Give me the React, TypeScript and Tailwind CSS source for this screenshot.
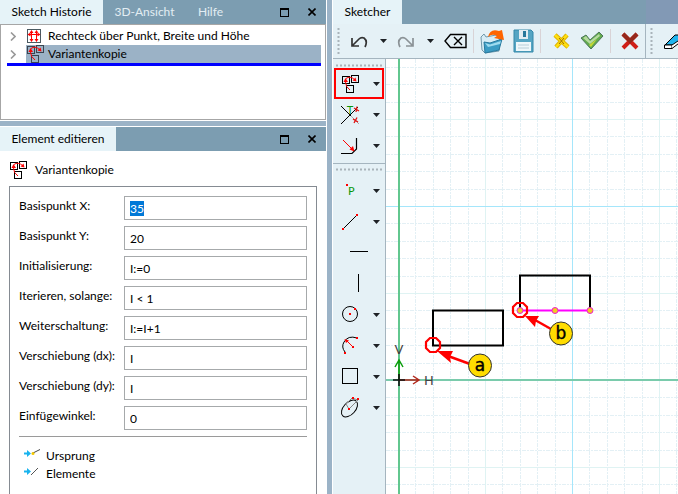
import { useEffect, useRef } from "react";
import type { ReactNode } from "react";

function VariantShapes({ ink = "#000" }: { ink?: string }) {
  return (
    <>
      <g shapeRendering="crispEdges" stroke={ink}>
        <rect x="0.5" y="1.5" width="7" height="7" />
        <rect x="9.5" y="0.5" width="7" height="7" />
        <rect x="4.5" y="10.5" width="7" height="7" />
      </g>
      <path d="M8 15 Q3.5 12 3.5 7 M4 3.5 Q8 0.5 12.5 4.5" stroke="#f00" />
      <path d="M1.5 7 L3.5 3 L6 7 Z M14.5 6.5 L10.5 5.5 L13.5 2.5 Z" fill="#f00" />
    </>
  );
}

function VariantIcon({ dark = true }: { dark?: boolean }) {
  return (
    <svg width="18" height="18" viewBox="0 0 18 18" fill="none" className="shrink-0">
      <VariantShapes ink={dark ? "#000" : "#3a4450"} />
    </svg>
  );
}

function RectIcon() {
  return (
    <svg width="14" height="14" viewBox="0 0 14 14" fill="none" className="shrink-0">
      <rect x="0.5" y="0.5" width="13" height="13" stroke="#4a5a62" shapeRendering="crispEdges" />
      <path d="M4.5 3 V11 M9.5 3 V11 M2 5.5 H12" stroke="#f00" shapeRendering="crispEdges" />
      <path d="M4.5 1 L6.5 4 H2.5 Z M9.5 1 L11.5 4 H7.5 Z M4.5 13 L6.5 10 H2.5 Z M9.5 13 L11.5 10 H7.5 Z M0.5 5.5 L3.5 3.5 V7.5 Z M13.5 5.5 L10.5 3.5 V7.5 Z" fill="#f00" />
    </svg>
  );
}

function WindowButtons() {
  return (
    <div className="ml-auto flex items-center gap-3 pr-1.5">
      <button type="button" aria-label="Maximieren" className="flex size-4 items-center justify-center">
        <svg width="9" height="9" viewBox="0 0 9 9" fill="none" shapeRendering="crispEdges">
          <path d="M0.5 1 V8.5 H8.5 V1 M0 1 H9" stroke="#000" />
          <path d="M0 0h9v2H0z" fill="#000" />
        </svg>
      </button>
      <button type="button" aria-label="Schließen" className="flex size-4 items-center justify-center">
        <svg width="8" height="8" viewBox="0 0 8 8" fill="none">
          <path d="M0.5 0.5 L7.5 7.5 M7.5 0.5 L0.5 7.5" stroke="#000" strokeWidth="1.6" />
        </svg>
      </button>
    </div>
  );
}

function HistoryRow({ icon, text, selected }: { icon: ReactNode; text: string; selected?: boolean }) {
  return (
    <li className="flex h-[18px] items-center">
      <button type="button" aria-label="Aufklappen" className="flex w-[19px] justify-start pl-[3px]">
        <svg width="6" height="9" viewBox="0 0 6 9" fill="none">
          <path d="M1 0.5 L5 4.5 L1 8.5" stroke="#999" strokeWidth="1.6" />
        </svg>
      </button>
      <div className={selected ? "flex h-full flex-1 items-center bg-[#9bb2c6]" : "flex h-full flex-1 items-center"}>
        <span className="flex w-[22px] items-center pl-px">{icon}</span>
        {text}
      </div>
    </li>
  );
}

const fields = [
  { id: "bx", label: "Basispunkt X:", value: "35" },
  { id: "by", label: "Basispunkt Y:", value: "20" },
  { id: "init", label: "Initialisierung:", value: "I:=0" },
  { id: "iter", label: "Iterieren, solange:", value: "I < 1" },
  { id: "next", label: "Weiterschaltung:", value: "I:=I+1" },
  { id: "dx", label: "Verschiebung (dx):", value: "I" },
  { id: "dy", label: "Verschiebung (dy):", value: "I" },
  { id: "angle", label: "Einfügewinkel:", value: "0" },
];

function LinkIcon({ origin }: { origin?: boolean }) {
  return (
    <svg width="18" height="16" viewBox="0 0 18 16" fill="none" className="shrink-0">
      <path d="M1 4.5 H4 V2 L8 5.5 L4 9 V6.5 H1 Z" fill="#19b3ee" />
      {origin ? (
        <>
          <path d="M9 5.5 L17 1.5" stroke="#444" />
          <circle cx="10" cy="5.5" r="1.5" fill="#f5c800" />
        </>
      ) : (
        <path d="M8 9 L15 2" stroke="#555" />
      )}
    </svg>
  );
}

function Caret() {
  return (
    <svg width="7" height="4" viewBox="0 0 7 4" className="shrink-0">
      <path d="M0 0 H7 L3.5 4 Z" fill="#1e2226" />
    </svg>
  );
}

function GripV() {
  return (
    <svg width="3" height="28" viewBox="0 0 3 28" className="shrink-0">
      <path d="M1.5 1 V28" stroke="#a9b4ba" strokeWidth="2" strokeDasharray="2 2" />
    </svg>
  );
}

function GripH() {
  return (
    <svg width="47" height="3" viewBox="0 0 47 3" className="shrink-0">
      <path d="M0 1.5 H47" stroke="#a9b4ba" strokeWidth="2" strokeDasharray="2 2" />
    </svg>
  );
}

function Divider() {
  return <div className="h-6 w-px shrink-0 bg-[#d9d3d6]" />;
}

function Tool({ label, highlight, menu = true, children }: { label: string; highlight?: boolean; menu?: boolean; children: ReactNode }) {
  return (
    <button
      type="button"
      aria-label={label}
      className={
        "flex h-[31px] w-[50px] items-center " +
        (highlight ? "border-2 border-[#ff0000] px-0.5 " : "px-1 ") +
        (menu ? "justify-between" : "justify-center")
      }
    >
      <svg width="24" height="24" viewBox="0 0 24 24" fill="none" className="shrink-0">
        {children}
      </svg>
      {menu && <Caret />}
    </button>
  );
}

function Dot({ x, y }: { x: number; y: number }) {
  return <rect x={x - 1} y={y - 1} width="2" height="2" fill="#f00" />;
}

const steps = Array.from({ length: 120 }, (_, i) => i - 8);

function Canvas() {
  return (
    <svg className="block h-full w-full bg-white" fill="none" role="img" aria-label="Zeichenfläche">
      {steps.map((i) => {
        const x = 12.5 + i * 17.4;
        const y = 321.5 - i * 17.4;
        const five = i % 5 === 0;
        return (
          <g key={i} stroke={five ? "#dff3f3" : "#e3f0f5"} strokeDasharray={five ? undefined : "4 1 2 1"} shapeRendering="crispEdges">
            {x > 0 && <line x1={x} x2={x} y1="0" y2="100%" />}
            <line x1="0" x2="100%" y1={y} y2={y} />
          </g>
        );
      })}
      <g stroke="#a5e6fb" shapeRendering="crispEdges">
        <line x1="186.5" x2="186.5" y1="0" y2="100%" />
        <line x1="0" x2="100%" y1="147.5" y2="147.5" />
      </g>
      <line x1="13" x2="13" y1="0" y2="100%" stroke="#62c78f" strokeWidth="2" />
      <line x1="0" x2="100%" y1="321" y2="321" stroke="#7acbac" strokeWidth="2" />
      <path d="M13 321 V302 M9 308 L13 301 L17 308" stroke="#0a9d0a" strokeWidth="1.5" />
      <path d="M13 321 H32 M27 317 L33 321 L27 325" stroke="#b3281c" strokeWidth="1.5" />
      <path d="M7 321 H19 M13 315 V327" stroke="#111" strokeWidth="1.6" />
      <g fill="#444" fontSize="13" textAnchor="middle" fontFamily="DejaVu Sans, sans-serif">
        <text x="13" y="295">V</text>
        <text x="43" y="326">H</text>
      </g>
      <rect x="47" y="251.5" width="70" height="35" stroke="#000" strokeWidth="2" />
      <path d="M134 251.5 V216.5 H204 V251.5" stroke="#000" strokeWidth="2" />
      <path d="M134 251.5 H204" stroke="#f0f" strokeWidth="2" />
      {[134, 169, 204].map((x) => (
        <circle key={x} cx={x} cy="251.5" r="3" fill="#f0cc20" stroke="#ee20d0" />
      ))}
      <g stroke="#f00" strokeWidth="2.2">
        <path d="M44 279 H50 L54 283 V289 L50 293 H44 L40 289 V283 Z" />
        <path d="M131 244 H137 L141 248 V254 L137 258 H131 L127 254 V248 Z" />
        <path d="M84 305 L62 297" strokeWidth="2.5" />
        <path d="M165 270 L149 261" strokeWidth="2.5" />
      </g>
      <path d="M51 292 L67 292 L64 298 L65 304 Z M139 257 L153 257 L150 262 L149 268 Z" fill="#f00" />
      <g fill="#ffdc00" stroke="#333">
        <circle cx="94" cy="306.5" r="11.5" />
        <circle cx="175" cy="274.5" r="11.5" />
      </g>
      <g fill="#000" stroke="#000" strokeWidth="0.4" fontSize="17" textAnchor="middle" fontFamily="DejaVu Sans, sans-serif">
        <text x="94" y="312">a</text>
        <text x="175" y="280">b</text>
      </g>
    </svg>
  );
}

export default function App() {
  const first = useRef<HTMLInputElement>(null);
  useEffect(() => {
    first.current?.focus();
    first.current?.select();
  }, []);

  return (
    <div className="flex h-screen overflow-hidden bg-[#9bb3c7] font-['Lato','Open_Sans',sans-serif] text-xs leading-4 text-black">
      <aside className="flex w-[327px] shrink-0 flex-col gap-[5px] border-r border-white">
        <section className="flex h-[121px] flex-col border-b border-white">
          <div className="flex h-6 items-stretch bg-[#7c9db1] text-[#e3edf3]">
            <button type="button" className="w-[103px] bg-[#e6f3f8] text-black">Sketch Historie</button>
            <button type="button" className="w-[83px]">3D-Ansicht</button>
            <button type="button" className="w-[49px]">Hilfe</button>
            <WindowButtons />
          </div>
          <ul className="flex-1 border border-[#a6a6a6] bg-white pt-0.5 pr-1 pl-1.5">
            <HistoryRow icon={<RectIcon />} text="Rechteck über Punkt, Breite und Höhe" />
            <HistoryRow icon={<VariantIcon dark={false} />} text="Variantenkopie" selected />
            <li aria-hidden="true" className="h-[3px] bg-[#0000ff]" />
          </ul>
        </section>

        <section className="flex flex-1 flex-col border-t border-white bg-white">
          <div className="flex h-6 shrink-0 items-stretch bg-[#7c9db1]">
            <button type="button" className="w-[116px] bg-[#e6f3f8]">Element editieren</button>
            <WindowButtons />
          </div>
          <h2 className="flex h-[35px] shrink-0 items-center gap-[7px] pt-0.5 pl-2.5">
            <VariantIcon />
            Variantenkopie
          </h2>
          <form className="mx-[9px] flex-1 border border-b-0 border-[#858b92] px-[9px] pt-[9px]">
            <div className="flex flex-col gap-1.5">
              {fields.map((f, i) => (
                <div key={f.id} className="flex h-6 items-center">
                  <label htmlFor={f.id} className="w-[105px] shrink-0 pb-1">{f.label}</label>
                  <input
                    id={f.id}
                    ref={i === 0 ? first : undefined}
                    type="text"
                    defaultValue={f.value}
                    className="h-6 w-full min-w-0 border border-[#a6a9ab] bg-white px-[5px] outline-none selection:bg-[#0078d7] selection:text-white"
                  />
                </div>
              ))}
            </div>
            <hr className="mt-1.5 border-[#9a9a9a]" />
            <ul className="pt-2.5 pl-1">
              <li className="flex h-[18px] items-center gap-[5px]"><LinkIcon origin />Ursprung</li>
              <li className="flex h-[18px] items-center gap-[5px]"><LinkIcon />Elemente</li>
            </ul>
          </form>
        </section>
      </aside>

      <main className="ml-[5px] flex min-w-0 flex-1 flex-col border-l border-white bg-[#e5f1f6]">
        <div className="flex h-6 shrink-0 bg-[#8299b5]">
          <div className="flex w-[313px] shrink-0 bg-[#7c9db1]">
            <button type="button" className="w-[69px] bg-[#e6f3f8]">Sketcher</button>
          </div>
        </div>
        <div className="flex h-[35px] shrink-0 items-center overflow-hidden border-b border-[#a5b5bf]">
          <div className="flex h-full w-[313px] shrink-0 items-center gap-1.5 border-r border-[#a5b5bf] pl-1">
            <div className="flex items-center gap-2.5">
              <GripV />
              <button type="button" aria-label="Rückgängig" className="flex items-center gap-3">
                <svg width="18" height="14" viewBox="0 0 18 14" fill="none" stroke="#333" strokeWidth="1.7">
                  <path d="M2 4 V12 H9 M2 12 L9 5 Q11 3 14 4 Q18 7 15 13" />
                </svg>
                <Caret />
              </button>
              <button type="button" aria-label="Wiederholen" className="flex items-center gap-3">
                <svg width="18" height="14" viewBox="0 0 18 14" fill="none" stroke="#8b9296" strokeWidth="1.7">
                  <path d="M16 4 V12 H9 M16 12 L9 5 Q7 3 4 4 Q0 7 3 13" />
                </svg>
                <Caret />
              </button>
              <button type="button" aria-label="Löschen">
                <svg width="23" height="16" viewBox="0 0 23 16" fill="none" stroke="#000" strokeWidth="1.4">
                  <path d="M6.5 1.5 H22 V14.5 H6.5 L1 8 Z M10 4 L18 12 M18 4 L10 12" />
                </svg>
              </button>
            </div>
            <Divider />
            <button type="button" aria-label="Öffnen" className="w-[27px]">
              <svg width="25" height="26" viewBox="0 0 25 26" fill="none">
                <path d="M1 9 L4 6 L6 9 L16 7 L20 12 L19 23 L5 25 L2 22 Z" fill="#d7edf6" stroke="#7198aa" />
                <path d="M4 14 L10 15 L22 11 L19 22 L5 25 Z" fill="#3b9cc4" stroke="#287a9e" />
                <path d="M5 15 L10 16.5 L21 13 L20 16 L8 19 Z" fill="#9edbef" />
                <path d="M8 9 Q10 0 19 3 L22 2 L24 12 L14 10 L17 8 Q12 5 8 9 Z" fill="#ff6500" />
              </svg>
            </button>
            <button type="button" aria-label="Speichern">
              <svg width="21" height="24" viewBox="0 0 21 24" fill="none">
                <path d="M1 1 H18 L20 3 V23 H1 Z" fill="#55a5c3" stroke="#3588a9" />
                <path d="M6 1 H15 V10 H6 Z" fill="#e4edf2" />
                <path d="M10 2 H13 V8 H10 Z" fill="#29789b" />
                <path d="M3 13 H18 V22 H3 Z" fill="#eef7fa" />
                <path d="M5 16 H16 M5 19 H16" stroke="#b8ced8" />
              </svg>
            </button>
            <Divider />
            <div className="flex items-center gap-2.5 pl-1.5">
              <button type="button" aria-label="Abbrechen">
                <svg width="17" height="18" viewBox="0 0 17 18" fill="none">
                  <path d="M2 3 L15 15 M14 3 L3 15" stroke="#dfb400" strokeWidth="4.5" />
                  <path d="M2 3 L15 15 M14 3 L3 15" stroke="#ffe010" strokeWidth="2.5" />
                  <path d="M6 6 L11 12 M11 6 L6 12" stroke="#9a6b00" />
                </svg>
              </button>
              <button type="button" aria-label="Übernehmen">
                <svg width="24" height="20" viewBox="0 0 24 20" fill="none">
                  <path d="M1 7 L6 4 L10 9 L19 1 L23 5 L11 18 Z" fill="#62ab4e" stroke="#4d7659" />
                  <path d="M3 7 L6 5 L10 10 L19 3 L20 5 L10 13 Z" fill="#b7dba0" />
                  <path d="M9 14 L17 8 L11 16 Z" fill="#c6d934" />
                </svg>
              </button>
            </div>
            <Divider />
            <button type="button" aria-label="Beenden" className="pl-1">
              <svg width="18" height="18" viewBox="0 0 18 18" fill="none" strokeWidth="4">
                <path d="M2 2 L16 16 M16 2 L2 16" stroke="#cf1f18" />
                <path d="M2 2 L9 9 L16 2" stroke="#96281b" />
              </svg>
            </button>
          </div>
          <div className="flex shrink-0 items-center gap-2.5 pl-1">
            <GripV />
            <button type="button" aria-label="Radieren">
              <svg width="26" height="17" viewBox="0 0 26 17" fill="none">
                <path d="M2 12 L12 2 H24 L13 12 Z" fill="#20b4ee" stroke="#000" />
                <path d="M1.5 12 H9 V15.5 H1.5 Z" fill="#fff" stroke="#000" />
                <path d="M9 15.5 L24 4 V2 L9 12" fill="#fff" stroke="#000" />
              </svg>
            </button>
          </div>
        </div>

        <div className="flex min-h-0 flex-1">
          <nav aria-label="Werkzeuge" className="w-[53px] shrink-0 border-r border-[#a5b5bf]">
            <div className="flex flex-col items-center border-b border-[#a5b5bf] pb-0.5">
              <div className="flex h-[9px] items-center pt-1"><GripH /></div>
              <Tool label="Variantenkopie" highlight>
                <g transform="translate(4 3)">
                  <VariantShapes />
                </g>
              </Tool>
              <Tool label="Trimmen">
                <path d="M3 3 L13 13 M3 21 L20 4" stroke="#000" />
                <path d="M13 13 L21 21" stroke="#aaa" />
                <text x="9" y="11" fontSize="10" fontFamily="DejaVu Sans, sans-serif" fill="#0a960a">T</text>
                <path d="M16 5 L21 8 M19 3.5 L18 9 M15 16 L20 19 M19 14.5 L16 20" stroke="#e01010" strokeWidth="1.3" />
              </Tool>
              <Tool label="Ausrunden">
                <path d="M3 19.5 H14 L18.5 15 V4" stroke="#000" strokeWidth="1.2" />
                <path d="M5 6 L15 16" stroke="#f00" />
                <path d="M16.5 17.5 L11.5 15.5 L15 12 Z" fill="#f00" />
              </Tool>
            </div>
            <div className="flex flex-col items-center">
              <div className="flex h-[11px] items-center"><GripH /></div>
              <Tool label="Punkt">
                <Dot x={9} y={6} />
                <text x="10" y="16" fontSize="11" fontFamily="DejaVu Sans, sans-serif" fill="#0a960a">P</text>
              </Tool>
              <Tool label="Linie">
                <path d="M5 19 L19 5" stroke="#000" />
                <Dot x={5} y={19} />
                <Dot x={19} y={5} />
              </Tool>
              <Tool label="Horizontale" menu={false}>
                <path d="M3 10.5 H21" stroke="#000" />
              </Tool>
              <Tool label="Vertikale" menu={false}>
                <path d="M11.5 2 V20" stroke="#000" />
              </Tool>
              <Tool label="Kreis">
                <circle cx="12" cy="11" r="7.5" stroke="#000" />
                <Dot x={12} y={11} />
                <Dot x={17} y={6} />
              </Tool>
              <Tool label="Bogen">
                <path d="M19 4 Q10 1 6 8 Q3 13 7 18" stroke="#000" />
                <path d="M15 13 L8 6" stroke="#f00" />
                <path d="M6.5 5 L11 6.5 L8 9 Z" fill="#f00" />
                <Dot x={19} y={4} />
                <Dot x={15} y={13} />
                <Dot x={7} y={19} />
              </Tool>
              <Tool label="Rechteck">
                <rect x="4.5" y="3.5" width="15" height="15" stroke="#000" />
              </Tool>
              <Tool label="Ellipse">
                <ellipse cx="11.5" cy="12.5" rx="10" ry="6" transform="rotate(-48 11.5 12.5)" stroke="#000" />
                <path d="M8 8 L14 2 L20 4 L11 13 Z" stroke="#888" />
                <Dot x={15} y={2} />
                <Dot x={20} y={3} />
                <Dot x={11} y={13} />
              </Tool>
            </div>
          </nav>
          <div className="min-w-0 flex-1">
            <Canvas />
          </div>
        </div>
      </main>
    </div>
  );
}
